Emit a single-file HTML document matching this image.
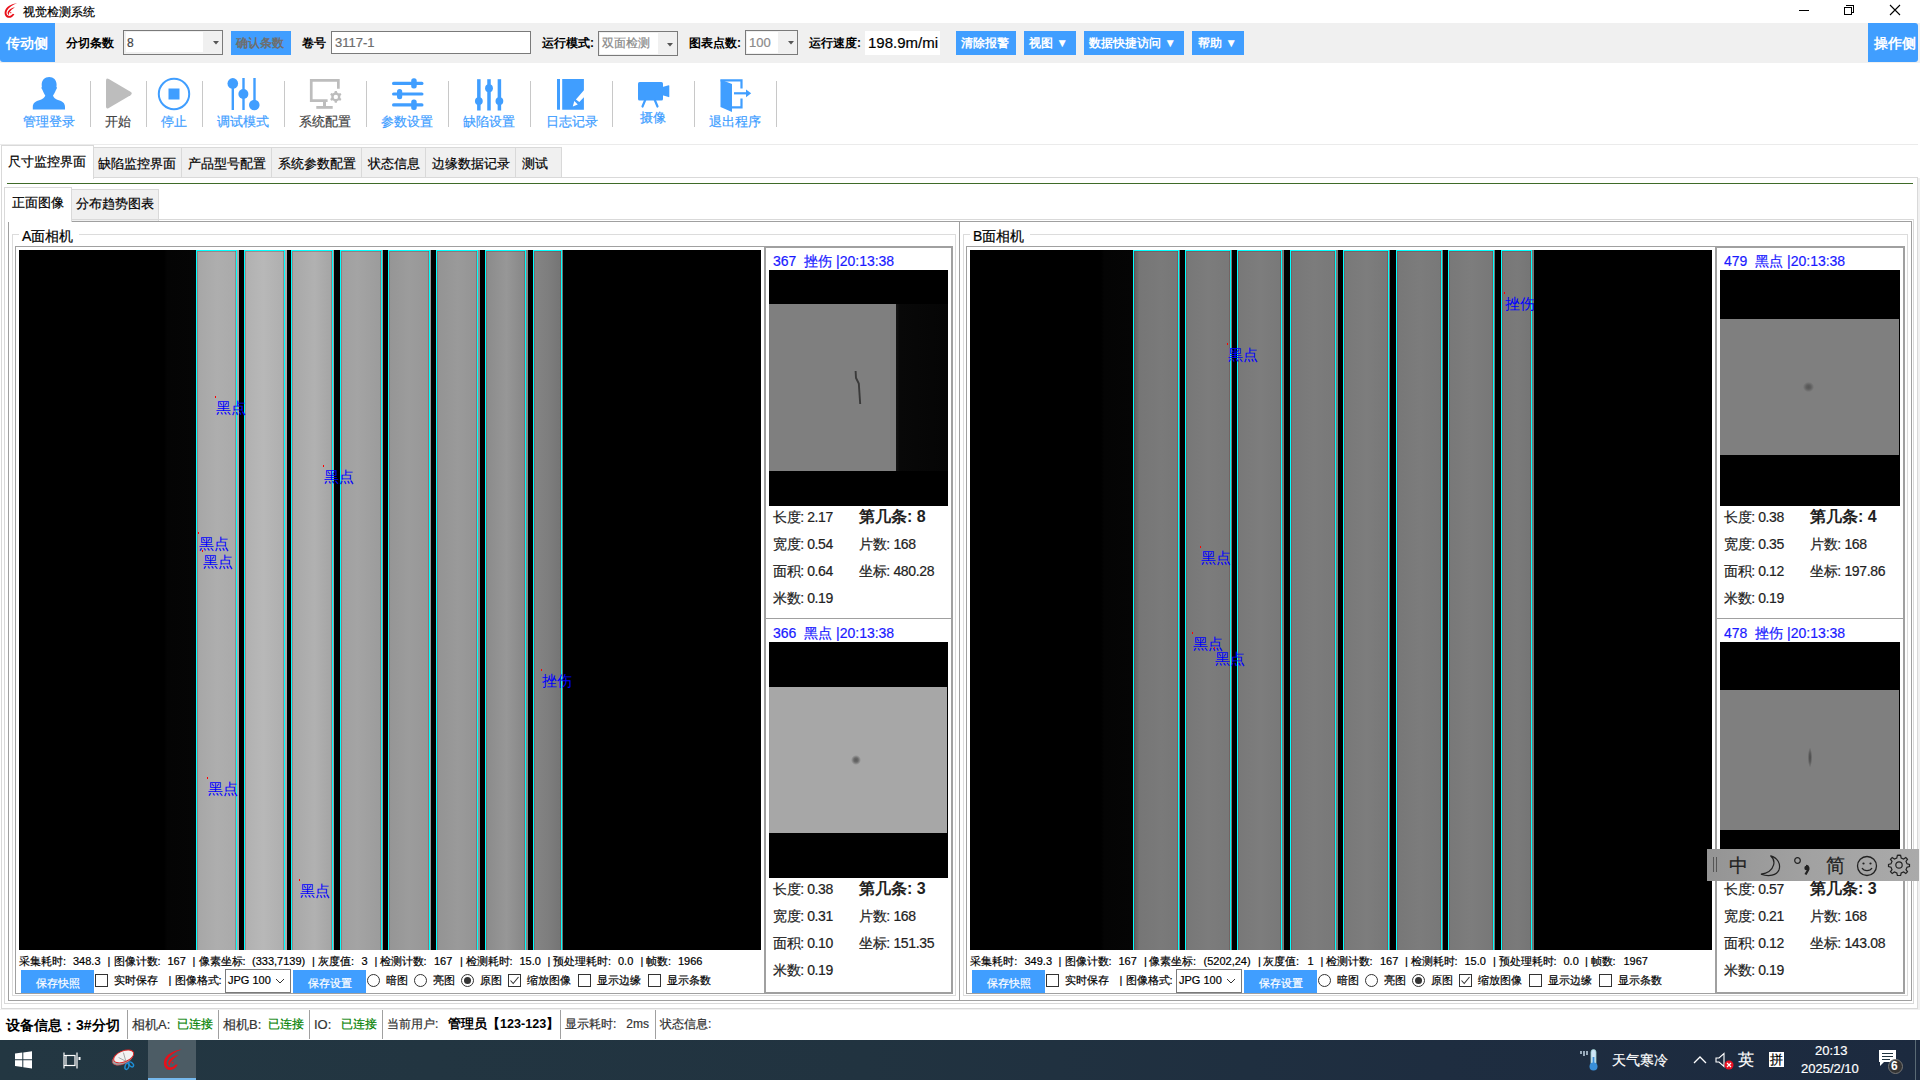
<!DOCTYPE html><html><head><meta charset="utf-8"><style>
html,body{margin:0;padding:0;width:1920px;height:1080px;overflow:hidden;background:#fff;
font-family:"Liberation Sans",sans-serif;}
.t{position:absolute;white-space:nowrap;-webkit-text-stroke-width:0.2px}
.b{position:absolute;box-sizing:border-box;}
svg{position:absolute;overflow:visible}
</style></head><body>
<svg style="left:3.5px;top:2.5px" width="13.6" height="15.6" viewBox="163 1048.8 19.3 22.1"><path d="M181.6 1049.3 C176.5 1049.8 168.5 1052.5 165.2 1058 C162.6 1062.5 164 1068.2 168.6 1069.6 C172 1070.5 175.5 1068.5 177.8 1064.6 L175.6 1064.2 C174 1066.3 171.5 1067.6 169.4 1067 C166.5 1066.2 165.8 1062.6 167.4 1059.6 C169.8 1054.8 175.5 1051.5 181.6 1049.3 Z" fill="#e8101a"/>
<path d="M178.5 1054.8 C174.5 1055.6 170.2 1057.8 168.6 1061 C167.6 1063 168.2 1065.3 170.2 1065.8 C169.7 1064.6 169.9 1063.2 170.8 1061.9 C172.5 1059.2 175.3 1057 178.5 1054.8 Z" fill="#e8101a"/>
<circle cx="172.6" cy="1062.5" r="0.9" fill="#e8101a"/></svg>
<div class="t" style="left:23px;top:6px;font-size:12px;line-height:12px;color:#000;">视觉检测系统</div>
<div class="b" style="left:1799px;top:10px;width:10px;height:1px;background:#000"></div>
<div class="b" style="left:1852px;top:12px;width:2px;height:1px;background:#000"></div>
<div class="b" style="left:1846px;top:5px;width:8px;height:8px;border:1px solid #000;border-left:none;border-bottom:none"></div>
<div class="b" style="left:1844px;top:7px;width:8px;height:8px;border:1px solid #000;background:#fff"></div>
<svg style="left:1889px;top:4px" width="12" height="12" viewBox="0 0 12 12"><path d="M1 1 L11 11 M11 1 L1 11" stroke="#000" stroke-width="1.1"/></svg>
<div class="b" style="left:0px;top:23px;width:1920px;height:40px;background:#f0f0f0"></div>
<div class="b" style="left:0px;top:23px;width:55px;height:39px;background:#409eff;border-radius:0 0 0 3px"></div>
<div class="t" style="left:6px;top:36px;font-size:14px;line-height:14px;color:#fff;font-weight:bold;-webkit-text-stroke-width:0;">传动侧</div>
<div class="t" style="left:66px;top:37px;font-size:12px;line-height:12px;color:#000;font-weight:bold;-webkit-text-stroke-width:0;">分切条数</div>
<div class="b" style="left:123px;top:30px;width:100px;height:25px;border:1px solid #7a7a7a;background:#f0f0f0"></div>
<div class="b" style="left:126px;top:32px;width:77px;height:20px;background:#fff"></div>
<svg style="left:213px;top:41px" width="6" height="4"><path d="M0 0 L6 0 L3 3.5 Z" fill="#555"/></svg>
<div class="t" style="left:127px;top:37px;font-size:12px;line-height:12px;color:#444;">8</div>
<div class="b" style="left:231px;top:31px;width:60px;height:24px;background:#409eff"></div>
<div class="t" style="left:236px;top:37px;font-size:12px;line-height:12px;color:#6e6e6e;font-weight:bold;-webkit-text-stroke-width:0;">确认条数</div>
<div class="t" style="left:302px;top:37px;font-size:12px;line-height:12px;color:#000;font-weight:bold;-webkit-text-stroke-width:0;">卷号</div>
<div class="b" style="left:331px;top:31px;width:200px;height:23px;border:1px solid #7a7a7a;background:#fff"></div>
<div class="t" style="left:335px;top:36px;font-size:13px;line-height:13px;color:#6d6d6d;">3117-1</div>
<div class="t" style="left:542px;top:37px;font-size:12px;line-height:12px;color:#000;font-weight:bold;-webkit-text-stroke-width:0;">运行模式:</div>
<div class="b" style="left:598px;top:31px;width:80px;height:25px;border:1px solid #7a7a7a;background:#f0f0f0"></div>
<div class="b" style="left:600px;top:33px;width:58px;height:21px;background:#fff"></div>
<svg style="left:667px;top:43px" width="6" height="4"><path d="M0 0 L6 0 L3 3.5 Z" fill="#555"/></svg>
<div class="t" style="left:602px;top:37px;font-size:12px;line-height:12px;color:#8a8a8a;">双面检测</div>
<div class="t" style="left:689px;top:37px;font-size:12px;line-height:12px;color:#000;font-weight:bold;-webkit-text-stroke-width:0;">图表点数:</div>
<div class="b" style="left:745px;top:30px;width:53px;height:25px;border:1px solid #7a7a7a;background:#f0f0f0"></div>
<div class="b" style="left:747px;top:32px;width:31px;height:21px;background:#fff"></div>
<svg style="left:788px;top:41px" width="6" height="4"><path d="M0 0 L6 0 L3 3.5 Z" fill="#555"/></svg>
<div class="t" style="left:749px;top:36px;font-size:13px;line-height:13px;color:#8a8a8a;">100</div>
<div class="t" style="left:809px;top:37px;font-size:12px;line-height:12px;color:#000;font-weight:bold;-webkit-text-stroke-width:0;">运行速度:</div>
<div class="b" style="left:865px;top:31px;width:75px;height:24px;background:#fff"></div>
<div class="t" style="left:868px;top:35px;font-size:15px;line-height:15px;color:#000;">198.9m/mi</div>
<div class="b" style="left:956px;top:31px;width:60px;height:24px;background:#409eff"></div>
<div class="t" style="left:961px;top:37px;font-size:12px;line-height:12px;color:#fff;font-weight:bold;-webkit-text-stroke-width:0;">清除报警</div>
<div class="b" style="left:1024px;top:31px;width:52px;height:24px;background:#409eff"></div>
<div class="t" style="left:1029px;top:37px;font-size:12px;line-height:12px;color:#fff;font-weight:bold;-webkit-text-stroke-width:0;">视图 ▼</div>
<div class="b" style="left:1084px;top:31px;width:100px;height:24px;background:#409eff"></div>
<div class="t" style="left:1089px;top:37px;font-size:12px;line-height:12px;color:#fff;font-weight:bold;-webkit-text-stroke-width:0;">数据快捷访问 ▼</div>
<div class="b" style="left:1192px;top:31px;width:52px;height:24px;background:#409eff"></div>
<div class="t" style="left:1198px;top:37px;font-size:12px;line-height:12px;color:#fff;font-weight:bold;-webkit-text-stroke-width:0;">帮助 ▼</div>
<div class="b" style="left:1868px;top:23px;width:50px;height:39px;background:#409eff;border-radius:0 3px 3px 0"></div>
<div class="t" style="left:1874px;top:36px;font-size:14px;line-height:14px;color:#fff;font-weight:bold;-webkit-text-stroke-width:0;">操作侧</div>
<div class="b" style="left:0px;top:144px;width:1918px;height:1px;background:#ebebeb"></div>
<div class="b" style="left:90px;top:81px;width:1px;height:46px;background:#c8c8c8"></div>
<div class="b" style="left:146px;top:81px;width:1px;height:46px;background:#c8c8c8"></div>
<div class="b" style="left:202px;top:81px;width:1px;height:46px;background:#c8c8c8"></div>
<div class="b" style="left:284px;top:81px;width:1px;height:46px;background:#c8c8c8"></div>
<div class="b" style="left:366px;top:81px;width:1px;height:46px;background:#c8c8c8"></div>
<div class="b" style="left:448px;top:81px;width:1px;height:46px;background:#c8c8c8"></div>
<div class="b" style="left:530px;top:81px;width:1px;height:46px;background:#c8c8c8"></div>
<div class="b" style="left:612px;top:81px;width:1px;height:46px;background:#c8c8c8"></div>
<div class="b" style="left:694px;top:81px;width:1px;height:46px;background:#c8c8c8"></div>
<div class="b" style="left:776px;top:81px;width:1px;height:46px;background:#c8c8c8"></div>
<div class="t" style="left:23px;top:115px;font-size:13px;line-height:13px;color:#409eff;">管理登录</div>
<div class="t" style="left:105px;top:115px;font-size:13px;line-height:13px;color:#444;">开始</div>
<div class="t" style="left:161px;top:115px;font-size:13px;line-height:13px;color:#409eff;">停止</div>
<div class="t" style="left:217px;top:115px;font-size:13px;line-height:13px;color:#409eff;">调试模式</div>
<div class="t" style="left:299px;top:115px;font-size:13px;line-height:13px;color:#444;">系统配置</div>
<div class="t" style="left:381px;top:115px;font-size:13px;line-height:13px;color:#409eff;">参数设置</div>
<div class="t" style="left:463px;top:115px;font-size:13px;line-height:13px;color:#409eff;">缺陷设置</div>
<div class="t" style="left:546px;top:115px;font-size:13px;line-height:13px;color:#409eff;">日志记录</div>
<div class="t" style="left:709px;top:115px;font-size:13px;line-height:13px;color:#409eff;">退出程序</div>
<div class="t" style="left:640px;top:111px;font-size:13px;line-height:13px;color:#409eff;">摄像</div>
<svg style="left:30px;top:74px" width="38" height="38" viewBox="0 0 38 38">
<path d="M19.2 3 C23.5 3 26.6 6 26.6 10.5 C26.6 11.5 26.5 12.2 26.4 12.8 C27.2 13.2 27 14.8 26 15.8 C25.3 18 24.2 20 23 21.5 C23.5 24 25.5 25 28 26 C32.5 27.2 35 29 35 33 V35.5 H2.8 V33 C2.8 29 5.5 27.2 10 26 C12.5 25 14.6 24 15.3 21.5 C14.2 20 13.1 18 12.4 15.8 C11.4 14.8 11.2 13.2 11.9 12.8 C11.8 12.2 11.7 11.5 11.7 10.5 C11.7 6 14.8 3 19.2 3 Z" fill="#409eff"/>
</svg>
<svg style="left:103px;top:77px" width="32" height="34" viewBox="0 0 32 34">
<path d="M3 3.5 Q3 0.5 5.8 2 L27.5 14.8 Q30 16.5 27.5 18.2 L5.8 31 Q3 32.5 3 29.5 Z" fill="#bdbdbd"/></svg>
<svg style="left:157px;top:77px" width="34" height="34" viewBox="0 0 34 34">
<circle cx="17" cy="17" r="15.2" fill="none" stroke="#409eff" stroke-width="2"/>
<rect x="11.5" y="11.5" width="11" height="11" fill="#409eff"/></svg>
<svg style="left:226px;top:77px" width="36" height="34" viewBox="0 0 36 34">
<rect x="5.6" y="2" width="2.4" height="31" fill="#409eff"/><circle cx="6.8" cy="6.4" r="5.3" fill="#409eff"/>
<rect x="16.3" y="1" width="2.4" height="32" fill="#409eff"/><circle cx="17.4" cy="17" r="5" fill="#409eff"/>
<rect x="27.3" y="1" width="2.4" height="30" fill="#409eff"/><circle cx="28.3" cy="28" r="5.3" fill="#409eff"/>
</svg>
<svg style="left:308px;top:78px" width="36" height="33" viewBox="0 0 36 33">
<path d="M1.9 1 H31.7 V10.7 H29 V3.7 H4.6 V21.3 H19.6 V24 H1.9 Z" fill="#bdbdbd"/>
<rect x="15" y="23.5" width="3" height="4.5" fill="#bdbdbd"/><rect x="8.3" y="28" width="16.4" height="2.8" fill="#bdbdbd"/>
<path d="M26.46 14.50 L26.76 12.99 L28.84 12.99 L29.14 14.50 L30.94 15.54 L32.40 15.04 L33.44 16.85 L32.28 17.87 L32.28 19.93 L33.44 20.95 L32.40 22.76 L30.94 22.26 L29.14 23.30 L28.84 24.81 L26.76 24.81 L26.46 23.30 L24.66 22.26 L23.20 22.76 L22.16 20.95 L23.32 19.93 L23.32 17.87 L22.16 16.85 L23.20 15.04 L24.66 15.54 Z" fill="#bdbdbd"/>
<circle cx="27.8" cy="18.9" r="2.2" fill="#fff"/>
</svg>
<svg style="left:390px;top:77px" width="36" height="34" viewBox="0 0 36 34">
<rect x="2" y="4.8" width="31.5" height="3.2" rx="1.6" fill="#409eff"/><rect x="21.2" y="1.2" width="5.5" height="10.3" rx="2.5" fill="#409eff"/>
<rect x="2" y="15.4" width="31.5" height="3.2" rx="1.6" fill="#409eff"/><rect x="7" y="11.9" width="5.2" height="10.3" rx="2.5" fill="#409eff"/>
<rect x="2" y="26.3" width="31.5" height="3.2" rx="1.6" fill="#409eff"/><rect x="21.2" y="22.5" width="5.5" height="10.4" rx="2.5" fill="#409eff"/>
</svg>
<svg style="left:474px;top:77px" width="32" height="34" viewBox="0 0 32 34">
<rect x="3.1" y="2.2" width="3.5" height="31.3" fill="#409eff"/><circle cx="4.85" cy="24.1" r="3.9" fill="#409eff"/>
<rect x="13.25" y="2.2" width="3.5" height="31.3" fill="#409eff"/><circle cx="15" cy="11.2" r="3.9" fill="#409eff"/>
<rect x="23.65" y="2.2" width="3.5" height="31.3" fill="#409eff"/><circle cx="25.4" cy="24.1" r="3.9" fill="#409eff"/>
</svg>
<svg style="left:556px;top:77px" width="30" height="34" viewBox="0 0 30 34">
<rect x="1" y="2" width="3" height="30.7" fill="#409eff"/>
<path d="M6.2 2 H27.9 V13.3 L19.9 22.6 L23.3 25.1 L27.9 20.2 V32.7 H6.2 Z" fill="#409eff"/>
<path d="M18.3 24 L21.8 27.6 L16.8 29.6 Z" fill="#fff"/>
</svg>
<svg style="left:636px;top:80px" width="36" height="30" viewBox="0 0 36 30">
<rect x="2" y="2" width="25" height="18.5" rx="1.6" fill="#409eff"/>
<path d="M26.5 7 L32.6 5.2 Q33.3 5.1 33.3 5.8 V16.6 Q33.3 17.3 32.6 17.1 L26.5 15.3 Z" fill="#409eff"/>
<path d="M9.2 20 L6.5 26.5 M18.8 20 L21.5 26.5" stroke="#409eff" stroke-width="2.2" stroke-linecap="round"/>
</svg>
<svg style="left:719px;top:78px" width="36" height="36" viewBox="0 0 36 36">
<path d="M1.5 1.5 L13 6 V34 L1.5 29 Z" fill="#409eff"/>
<path d="M1.5 2.3 H22.5 V10.5" stroke="#409eff" stroke-width="2.2" fill="none"/>
<path d="M12 29.3 H22.5 V20.5" stroke="#409eff" stroke-width="2.2" fill="none"/>
<path d="M15 15.3 H28.5" stroke="#409eff" stroke-width="2.2"/>
<path d="M27 11.5 L32.2 15.3 L27 19.3 Z" fill="#409eff"/>
</svg>
<div class="b" style="left:93px;top:147px;width:89px;height:31px;background:#f0f0f0;border:1px solid #d9d9d9;border-bottom:none"></div>
<div class="t" style="left:97.5px;top:157px;font-size:13.3px;line-height:13.3px;color:#000;">缺陷监控界面</div>
<div class="b" style="left:181px;top:147px;width:91px;height:31px;background:#f0f0f0;border:1px solid #d9d9d9;border-bottom:none"></div>
<div class="t" style="left:187.7px;top:157px;font-size:13.3px;line-height:13.3px;color:#000;">产品型号配置</div>
<div class="b" style="left:271px;top:147px;width:91px;height:31px;background:#f0f0f0;border:1px solid #d9d9d9;border-bottom:none"></div>
<div class="t" style="left:277.7px;top:157px;font-size:13.3px;line-height:13.3px;color:#000;">系统参数配置</div>
<div class="b" style="left:361px;top:147px;width:65px;height:31px;background:#f0f0f0;border:1px solid #d9d9d9;border-bottom:none"></div>
<div class="t" style="left:367.7px;top:157px;font-size:13.3px;line-height:13.3px;color:#000;">状态信息</div>
<div class="b" style="left:425px;top:147px;width:91px;height:31px;background:#f0f0f0;border:1px solid #d9d9d9;border-bottom:none"></div>
<div class="t" style="left:431.8px;top:157px;font-size:13.3px;line-height:13.3px;color:#000;">边缘数据记录</div>
<div class="b" style="left:515px;top:147px;width:47px;height:31px;background:#f0f0f0;border:1px solid #d9d9d9;border-bottom:none"></div>
<div class="t" style="left:521.8px;top:157px;font-size:13.3px;line-height:13.3px;color:#000;">测试</div>
<div class="b" style="left:1px;top:177px;width:1917px;height:832px;border:1px solid #d9d9d9"></div>
<div class="b" style="left:0px;top:1009px;width:1918px;height:1px;background:#f0f0f0"></div>
<div class="b" style="left:1px;top:145px;width:93px;height:34px;background:#fff;border:1px solid #d9d9d9;border-bottom:none"></div>
<div class="t" style="left:8px;top:155px;font-size:13.3px;line-height:13.3px;color:#000;">尺寸监控界面</div>
<div class="b" style="left:7px;top:183px;width:1906px;height:1px;background:#3f6b28"></div>
<div class="b" style="left:71px;top:189px;width:88px;height:32px;background:#f0f0f0;border:1px solid #d9d9d9;border-bottom:none"></div>
<div class="t" style="left:76px;top:197px;font-size:13px;line-height:13px;color:#000;">分布趋势图表</div>
<div class="b" style="left:4px;top:219px;width:1910px;height:785px;border:1px solid #d9d9d9"></div>
<div class="b" style="left:8px;top:221px;width:1904px;height:780px;border:1px solid #a0a0a0"></div>
<div class="b" style="left:4px;top:187px;width:68px;height:35px;background:#fff;border:1px solid #d9d9d9;border-bottom:none"></div>
<div class="t" style="left:12px;top:196px;font-size:13px;line-height:13px;color:#000;">正面图像</div>
<div class="b" style="left:959px;top:221px;width:1px;height:780px;background:#a0a0a0"></div>
<div class="b" style="left:12px;top:234px;width:944px;height:762px;border:1px solid #dcdcdc"></div>
<div class="b" style="left:19px;top:229px;width:60px;height:15px;background:#fff"></div>
<div class="t" style="left:22px;top:229px;font-size:14px;line-height:14px;color:#000;">A面相机</div>
<div class="b" style="left:15px;top:246px;width:938px;height:748px;border:1px solid #a0a0a0"></div>
<div class="b" style="left:19px;top:250px;width:742px;height:700px;background:#000"></div>
<div class="b" style="left:164px;top:250px;width:32px;height:700px;background:linear-gradient(90deg,#000,#040404 10%,#050505)"></div>
<div class="b" style="left:196px;top:250px;width:43px;height:700px;background:linear-gradient(90deg,#a6a6a6,#aeaeae 50%,#a9a9a9)"></div>
<div class="b" style="left:196px;top:250px;width:41px;height:700px;border:1px solid #00ffff;border-bottom:none;box-shadow:inset 1px 1px 0 rgba(110,50,50,0.3),inset -1px 0 0 rgba(110,50,50,0.3)"></div>
<div class="b" style="left:244px;top:250px;width:43px;height:700px;background:linear-gradient(90deg,#b0b0b0,#b8b8b8 45%,#adadad)"></div>
<div class="b" style="left:244px;top:250px;width:41px;height:700px;border:1px solid #00ffff;border-bottom:none;box-shadow:inset 1px 1px 0 rgba(110,50,50,0.3),inset -1px 0 0 rgba(110,50,50,0.3)"></div>
<div class="b" style="left:291px;top:250px;width:43px;height:700px;background:linear-gradient(90deg,#a7a7a7,#b1b1b1 55%,#a3a3a3)"></div>
<div class="b" style="left:291px;top:250px;width:42px;height:700px;border:1px solid #00ffff;border-bottom:none;box-shadow:inset 1px 1px 0 rgba(110,50,50,0.3),inset -1px 0 0 rgba(110,50,50,0.3)"></div>
<div class="b" style="left:340px;top:250px;width:43px;height:700px;background:linear-gradient(90deg,#9f9f9f,#a4a4a4 40%,#9b9b9b)"></div>
<div class="b" style="left:340px;top:250px;width:42px;height:700px;border:1px solid #00ffff;border-bottom:none;box-shadow:inset 1px 1px 0 rgba(110,50,50,0.3),inset -1px 0 0 rgba(110,50,50,0.3)"></div>
<div class="b" style="left:388px;top:250px;width:43px;height:700px;background:linear-gradient(90deg,#959595,#9c9c9c 50%,#969696)"></div>
<div class="b" style="left:388px;top:250px;width:42px;height:700px;border:1px solid #00ffff;border-bottom:none;box-shadow:inset 1px 1px 0 rgba(110,50,50,0.3),inset -1px 0 0 rgba(110,50,50,0.3)"></div>
<div class="b" style="left:436px;top:250px;width:44px;height:700px;background:linear-gradient(90deg,#939393,#9a9a9a 50%,#939393)"></div>
<div class="b" style="left:436px;top:250px;width:42px;height:700px;border:1px solid #00ffff;border-bottom:none;box-shadow:inset 1px 1px 0 rgba(110,50,50,0.3),inset -1px 0 0 rgba(110,50,50,0.3)"></div>
<div class="b" style="left:485px;top:250px;width:43px;height:700px;background:linear-gradient(90deg,#8a8a8a,#979797 50%,#848484)"></div>
<div class="b" style="left:485px;top:250px;width:41px;height:700px;border:1px solid #00ffff;border-bottom:none;box-shadow:inset 1px 1px 0 rgba(110,50,50,0.3),inset -1px 0 0 rgba(110,50,50,0.3)"></div>
<div class="b" style="left:533px;top:250px;width:30px;height:700px;background:linear-gradient(90deg,#858585,#7e7e7e 50%,#737373)"></div>
<div class="b" style="left:533px;top:250px;width:29px;height:700px;border:1px solid #00ffff;border-bottom:none;box-shadow:inset 1px 1px 0 rgba(110,50,50,0.3),inset -1px 0 0 rgba(110,50,50,0.3)"></div>
<div class="b" style="left:215px;top:396px;width:1px;height:2px;background:#f00"></div>
<div class="t" style="left:216px;top:400px;font-size:15px;line-height:15px;color:#0000ff;-webkit-text-stroke-width:0;">黑点</div>
<div class="b" style="left:323px;top:465px;width:1px;height:2px;background:#f00"></div>
<div class="t" style="left:324px;top:469px;font-size:15px;line-height:15px;color:#0000ff;-webkit-text-stroke-width:0;">黑点</div>
<div class="b" style="left:198px;top:532px;width:1px;height:2px;background:#f00"></div>
<div class="t" style="left:199px;top:536px;font-size:15px;line-height:15px;color:#0000ff;-webkit-text-stroke-width:0;">黑点</div>
<div class="b" style="left:202px;top:550px;width:1px;height:2px;background:#f00"></div>
<div class="t" style="left:203px;top:554px;font-size:15px;line-height:15px;color:#0000ff;-webkit-text-stroke-width:0;">黑点</div>
<div class="b" style="left:541px;top:669px;width:1px;height:2px;background:#f00"></div>
<div class="t" style="left:542px;top:673px;font-size:15px;line-height:15px;color:#0000ff;-webkit-text-stroke-width:0;">挫伤</div>
<div class="b" style="left:207px;top:777px;width:1px;height:2px;background:#f00"></div>
<div class="t" style="left:208px;top:781px;font-size:15px;line-height:15px;color:#0000ff;-webkit-text-stroke-width:0;">黑点</div>
<div class="b" style="left:299px;top:879px;width:1px;height:2px;background:#f00"></div>
<div class="t" style="left:300px;top:883px;font-size:15px;line-height:15px;color:#0000ff;-webkit-text-stroke-width:0;">黑点</div>
<div class="t" style="left:19px;top:956px;font-size:11px;line-height:11px;color:#000;">采集耗时:</div>
<div class="t" style="left:73px;top:956px;font-size:11px;line-height:11px;color:#000;">348.3</div>
<div class="t" style="left:107.5px;top:956px;font-size:11px;line-height:11px;color:#000;">|</div>
<div class="t" style="left:113.5px;top:956px;font-size:11px;line-height:11px;color:#000;">图像计数:</div>
<div class="t" style="left:167.5px;top:956px;font-size:11px;line-height:11px;color:#000;">167</div>
<div class="t" style="left:192.5px;top:956px;font-size:11px;line-height:11px;color:#000;">|</div>
<div class="t" style="left:198.5px;top:956px;font-size:11px;line-height:11px;color:#000;">像素坐标:</div>
<div class="t" style="left:252px;top:956px;font-size:11px;line-height:11px;color:#000;">(333,7139)</div>
<div class="t" style="left:312px;top:956px;font-size:11px;line-height:11px;color:#000;">|</div>
<div class="t" style="left:318px;top:956px;font-size:11px;line-height:11px;color:#000;">灰度值:</div>
<div class="t" style="left:361.5px;top:956px;font-size:11px;line-height:11px;color:#000;">3</div>
<div class="t" style="left:374.5px;top:956px;font-size:11px;line-height:11px;color:#000;">|</div>
<div class="t" style="left:379.5px;top:956px;font-size:11px;line-height:11px;color:#000;">检测计数:</div>
<div class="t" style="left:434px;top:956px;font-size:11px;line-height:11px;color:#000;">167</div>
<div class="t" style="left:460px;top:956px;font-size:11px;line-height:11px;color:#000;">|</div>
<div class="t" style="left:465.5px;top:956px;font-size:11px;line-height:11px;color:#000;">检测耗时:</div>
<div class="t" style="left:519.5px;top:956px;font-size:11px;line-height:11px;color:#000;">15.0</div>
<div class="t" style="left:547.5px;top:956px;font-size:11px;line-height:11px;color:#000;">|</div>
<div class="t" style="left:553px;top:956px;font-size:11px;line-height:11px;color:#000;">预处理耗时:</div>
<div class="t" style="left:618px;top:956px;font-size:11px;line-height:11px;color:#000;">0.0</div>
<div class="t" style="left:640.5px;top:956px;font-size:11px;line-height:11px;color:#000;">|</div>
<div class="t" style="left:646px;top:956px;font-size:11px;line-height:11px;color:#000;">帧数:</div>
<div class="t" style="left:678px;top:956px;font-size:11px;line-height:11px;color:#000;">1966</div>
<div class="b" style="left:21px;top:970px;width:73px;height:23px;background:#409eff"></div>
<div class="t" style="left:36px;top:978px;font-size:11px;line-height:11px;color:#fff;">保存快照</div>
<div class="b" style="left:95px;top:974px;width:13px;height:13px;border:1px solid #333;background:#fff"></div>
<div class="t" style="left:114px;top:975px;font-size:11px;line-height:11px;color:#000;">实时保存</div>
<div class="t" style="left:168.5px;top:975px;font-size:11px;line-height:11px;color:#000;">|</div>
<div class="t" style="left:174.5px;top:975px;font-size:11px;line-height:11px;color:#000;">图像格式:</div>
<div class="b" style="left:225px;top:969px;width:66px;height:24px;border:1px solid #7a7a7a;background:#fff"></div>
<div class="t" style="left:228px;top:975px;font-size:11px;line-height:11px;color:#000;">JPG 100</div>
<svg style="left:275px;top:978px" width="10" height="6"><path d="M1 1 L5 5 L9 1" stroke="#333" stroke-width="1" fill="none"/></svg>
<div class="b" style="left:293px;top:970px;width:73px;height:23px;background:#409eff"></div>
<div class="t" style="left:308px;top:978px;font-size:11px;line-height:11px;color:#fff;">保存设置</div>
<div class="b" style="left:367px;top:974px;width:13px;height:13px;border:1px solid #333;border-radius:50%;background:#fff"></div>
<div class="t" style="left:386px;top:975px;font-size:11px;line-height:11px;color:#000;">暗图</div>
<div class="b" style="left:414px;top:974px;width:13px;height:13px;border:1px solid #333;border-radius:50%;background:#fff"></div>
<div class="t" style="left:433px;top:975px;font-size:11px;line-height:11px;color:#000;">亮图</div>
<div class="b" style="left:461px;top:974px;width:13px;height:13px;border:1px solid #333;border-radius:50%;background:#fff"></div>
<div class="b" style="left:464px;top:977px;width:7px;height:7px;background:#333;border-radius:50%"></div>
<div class="t" style="left:480px;top:975px;font-size:11px;line-height:11px;color:#000;">原图</div>
<div class="b" style="left:508px;top:974px;width:13px;height:13px;border:1px solid #333;background:#fff"></div>
<svg style="left:508px;top:974px" width="13" height="13"><path d="M2.5 6.5 L5.2 9.5 L10.5 3" stroke="#333" stroke-width="1.1" fill="none"/></svg>
<div class="t" style="left:527px;top:975px;font-size:11px;line-height:11px;color:#000;">缩放图像</div>
<div class="b" style="left:578px;top:974px;width:13px;height:13px;border:1px solid #333;background:#fff"></div>
<div class="t" style="left:597px;top:975px;font-size:11px;line-height:11px;color:#000;">显示边缘</div>
<div class="b" style="left:648px;top:974px;width:13px;height:13px;border:1px solid #333;background:#fff"></div>
<div class="t" style="left:667px;top:975px;font-size:11px;line-height:11px;color:#000;">显示条数</div>
<div class="b" style="left:764px;top:246px;width:189px;height:748px;border:2px solid #a0a0a0;background:#fff"></div>
<div class="b" style="left:766px;top:618px;width:185px;height:1px;background:#a0a0a0"></div>
<div class="t" style="left:773px;top:254px;font-size:14px;line-height:14px;color:#1a1aff;">367&nbsp; 挫伤 |20:13:38</div>
<div class="b" style="left:769px;top:270px;width:179px;height:236px;background:#000"></div>
<div class="b" style="left:769px;top:304px;width:127px;height:167px;background:#7f7f7f"></div><div class="b" style="left:896px;top:304px;width:52px;height:167px;background:linear-gradient(90deg,#161616,#080808 8%,#050505)"></div><svg style="left:0;top:0" width="1" height="1"><path d="M855.6 371 L856 378 L858.8 383.5 L860.2 404" stroke="#2e2e2e" stroke-width="1.9" fill="none" opacity="0.85"/></svg>
<div class="t" style="left:773px;top:510px;font-size:14px;line-height:14px;color:#222;letter-spacing:-0.4px;">长度: 2.17</div>
<div class="t" style="left:859px;top:509px;font-size:16px;line-height:16px;color:#222;font-weight:bold;-webkit-text-stroke-width:0;">第几条: 8</div>
<div class="t" style="left:773px;top:537px;font-size:14px;line-height:14px;color:#222;letter-spacing:-0.4px;">宽度: 0.54</div>
<div class="t" style="left:859px;top:537px;font-size:14px;line-height:14px;color:#222;letter-spacing:-0.35px;">片数: 168</div>
<div class="t" style="left:773px;top:564px;font-size:14px;line-height:14px;color:#222;letter-spacing:-0.4px;">面积: 0.64</div>
<div class="t" style="left:859px;top:564px;font-size:14px;line-height:14px;color:#222;letter-spacing:-0.35px;">坐标: 480.28</div>
<div class="t" style="left:773px;top:591px;font-size:14px;line-height:14px;color:#222;letter-spacing:-0.4px;">米数: 0.19</div>
<div class="t" style="left:773px;top:626px;font-size:14px;line-height:14px;color:#1a1aff;">366&nbsp; 黑点 |20:13:38</div>
<div class="b" style="left:769px;top:642px;width:179px;height:236px;background:#000"></div>
<div class="b" style="left:769px;top:687px;width:178px;height:146px;background:#a7a7a7"></div><div class="b" style="left:851px;top:755px;width:10px;height:10px;background:radial-gradient(circle,#5a5a5a 0,#6a6a6a 30%,rgba(167,167,167,0) 70%)"></div>
<div class="t" style="left:773px;top:882px;font-size:14px;line-height:14px;color:#222;letter-spacing:-0.4px;">长度: 0.38</div>
<div class="t" style="left:859px;top:881px;font-size:16px;line-height:16px;color:#222;font-weight:bold;-webkit-text-stroke-width:0;">第几条: 3</div>
<div class="t" style="left:773px;top:909px;font-size:14px;line-height:14px;color:#222;letter-spacing:-0.4px;">宽度: 0.31</div>
<div class="t" style="left:859px;top:909px;font-size:14px;line-height:14px;color:#222;letter-spacing:-0.35px;">片数: 168</div>
<div class="t" style="left:773px;top:936px;font-size:14px;line-height:14px;color:#222;letter-spacing:-0.4px;">面积: 0.10</div>
<div class="t" style="left:859px;top:936px;font-size:14px;line-height:14px;color:#222;letter-spacing:-0.35px;">坐标: 151.35</div>
<div class="t" style="left:773px;top:963px;font-size:14px;line-height:14px;color:#222;letter-spacing:-0.4px;">米数: 0.19</div>
<div class="b" style="left:963px;top:234px;width:945px;height:762px;border:1px solid #dcdcdc"></div>
<div class="b" style="left:970px;top:229px;width:60px;height:15px;background:#fff"></div>
<div class="t" style="left:973px;top:229px;font-size:14px;line-height:14px;color:#000;">B面相机</div>
<div class="b" style="left:966px;top:246px;width:939px;height:748px;border:1px solid #a0a0a0"></div>
<div class="b" style="left:970px;top:250px;width:742px;height:700px;background:#000"></div>
<div class="b" style="left:1101px;top:250px;width:32px;height:700px;background:linear-gradient(90deg,#000,#040404 10%,#050505)"></div>
<div class="b" style="left:1133px;top:250px;width:47px;height:700px;background:linear-gradient(90deg,#5a5a5a,#767676 14%,#7a7a7a 60%,#777)"></div>
<div class="b" style="left:1133px;top:250px;width:46px;height:700px;border:1px solid #00ffff;border-bottom:none;box-shadow:inset 1px 1px 0 rgba(110,50,50,0.3),inset -1px 0 0 rgba(110,50,50,0.3)"></div>
<div class="b" style="left:1185px;top:250px;width:47px;height:700px;background:linear-gradient(90deg,#777,#7c7c7c 50%,#787878)"></div>
<div class="b" style="left:1185px;top:250px;width:46px;height:700px;border:1px solid #00ffff;border-bottom:none;box-shadow:inset 1px 1px 0 rgba(110,50,50,0.3),inset -1px 0 0 rgba(110,50,50,0.3)"></div>
<div class="b" style="left:1237px;top:250px;width:47px;height:700px;background:linear-gradient(90deg,#787878,#7d7d7d 50%,#787878)"></div>
<div class="b" style="left:1237px;top:250px;width:45px;height:700px;border:1px solid #00ffff;border-bottom:none;box-shadow:inset 1px 1px 0 rgba(110,50,50,0.3),inset -1px 0 0 rgba(110,50,50,0.3)"></div>
<div class="b" style="left:1290px;top:250px;width:48px;height:700px;background:linear-gradient(90deg,#777,#7c7c7c 50%,#787878)"></div>
<div class="b" style="left:1290px;top:250px;width:46px;height:700px;border:1px solid #00ffff;border-bottom:none;box-shadow:inset 1px 1px 0 rgba(110,50,50,0.3),inset -1px 0 0 rgba(110,50,50,0.3)"></div>
<div class="b" style="left:1343px;top:250px;width:47px;height:700px;background:linear-gradient(90deg,#787878,#7d7d7d 50%,#777)"></div>
<div class="b" style="left:1343px;top:250px;width:46px;height:700px;border:1px solid #00ffff;border-bottom:none;box-shadow:inset 1px 1px 0 rgba(110,50,50,0.3),inset -1px 0 0 rgba(110,50,50,0.3)"></div>
<div class="b" style="left:1396px;top:250px;width:47px;height:700px;background:linear-gradient(90deg,#777,#7c7c7c 50%,#787878)"></div>
<div class="b" style="left:1396px;top:250px;width:46px;height:700px;border:1px solid #00ffff;border-bottom:none;box-shadow:inset 1px 1px 0 rgba(110,50,50,0.3),inset -1px 0 0 rgba(110,50,50,0.3)"></div>
<div class="b" style="left:1448px;top:250px;width:47px;height:700px;background:linear-gradient(90deg,#787878,#7d7d7d 50%,#777)"></div>
<div class="b" style="left:1448px;top:250px;width:46px;height:700px;border:1px solid #00ffff;border-bottom:none;box-shadow:inset 1px 1px 0 rgba(110,50,50,0.3),inset -1px 0 0 rgba(110,50,50,0.3)"></div>
<div class="b" style="left:1501px;top:250px;width:33px;height:700px;background:linear-gradient(90deg,#777,#7a7a7a 50%,#747474)"></div>
<div class="b" style="left:1501px;top:250px;width:31px;height:700px;border:1px solid #00ffff;border-bottom:none;box-shadow:inset 1px 1px 0 rgba(110,50,50,0.3),inset -1px 0 0 rgba(110,50,50,0.3)"></div>
<div class="b" style="left:1504px;top:292px;width:1px;height:2px;background:#f00"></div>
<div class="t" style="left:1505px;top:296px;font-size:15px;line-height:15px;color:#0000ff;-webkit-text-stroke-width:0;">挫伤</div>
<div class="b" style="left:1227px;top:343px;width:1px;height:2px;background:#f00"></div>
<div class="t" style="left:1228px;top:347px;font-size:15px;line-height:15px;color:#0000ff;-webkit-text-stroke-width:0;">黑点</div>
<div class="b" style="left:1200px;top:546px;width:1px;height:2px;background:#f00"></div>
<div class="t" style="left:1201px;top:550px;font-size:15px;line-height:15px;color:#0000ff;-webkit-text-stroke-width:0;">黑点</div>
<div class="b" style="left:1192px;top:632px;width:1px;height:2px;background:#f00"></div>
<div class="t" style="left:1193px;top:636px;font-size:15px;line-height:15px;color:#0000ff;-webkit-text-stroke-width:0;">黑点</div>
<div class="b" style="left:1214px;top:647px;width:1px;height:2px;background:#f00"></div>
<div class="t" style="left:1215px;top:651px;font-size:15px;line-height:15px;color:#0000ff;-webkit-text-stroke-width:0;">黑点</div>
<div class="t" style="left:970.3px;top:956px;font-size:11px;line-height:11px;color:#000;">采集耗时:</div>
<div class="t" style="left:1024.5px;top:956px;font-size:11px;line-height:11px;color:#000;">349.3</div>
<div class="t" style="left:1058.5px;top:956px;font-size:11px;line-height:11px;color:#000;">|</div>
<div class="t" style="left:1064.5px;top:956px;font-size:11px;line-height:11px;color:#000;">图像计数:</div>
<div class="t" style="left:1118.5px;top:956px;font-size:11px;line-height:11px;color:#000;">167</div>
<div class="t" style="left:1144px;top:956px;font-size:11px;line-height:11px;color:#000;">|</div>
<div class="t" style="left:1149px;top:956px;font-size:11px;line-height:11px;color:#000;">像素坐标:</div>
<div class="t" style="left:1203.5px;top:956px;font-size:11px;line-height:11px;color:#000;">(5202,24)</div>
<div class="t" style="left:1258px;top:956px;font-size:11px;line-height:11px;color:#000;">|</div>
<div class="t" style="left:1263px;top:956px;font-size:11px;line-height:11px;color:#000;">灰度值:</div>
<div class="t" style="left:1307.5px;top:956px;font-size:11px;line-height:11px;color:#000;">1</div>
<div class="t" style="left:1320.5px;top:956px;font-size:11px;line-height:11px;color:#000;">|</div>
<div class="t" style="left:1325.5px;top:956px;font-size:11px;line-height:11px;color:#000;">检测计数:</div>
<div class="t" style="left:1380px;top:956px;font-size:11px;line-height:11px;color:#000;">167</div>
<div class="t" style="left:1405px;top:956px;font-size:11px;line-height:11px;color:#000;">|</div>
<div class="t" style="left:1410.5px;top:956px;font-size:11px;line-height:11px;color:#000;">检测耗时:</div>
<div class="t" style="left:1464.5px;top:956px;font-size:11px;line-height:11px;color:#000;">15.0</div>
<div class="t" style="left:1493px;top:956px;font-size:11px;line-height:11px;color:#000;">|</div>
<div class="t" style="left:1498.5px;top:956px;font-size:11px;line-height:11px;color:#000;">预处理耗时:</div>
<div class="t" style="left:1563.5px;top:956px;font-size:11px;line-height:11px;color:#000;">0.0</div>
<div class="t" style="left:1585px;top:956px;font-size:11px;line-height:11px;color:#000;">|</div>
<div class="t" style="left:1590.5px;top:956px;font-size:11px;line-height:11px;color:#000;">帧数:</div>
<div class="t" style="left:1623.5px;top:956px;font-size:11px;line-height:11px;color:#000;">1967</div>
<div class="b" style="left:972px;top:970px;width:73px;height:23px;background:#409eff"></div>
<div class="t" style="left:987px;top:978px;font-size:11px;line-height:11px;color:#fff;">保存快照</div>
<div class="b" style="left:1046px;top:974px;width:13px;height:13px;border:1px solid #333;background:#fff"></div>
<div class="t" style="left:1065px;top:975px;font-size:11px;line-height:11px;color:#000;">实时保存</div>
<div class="t" style="left:1119.5px;top:975px;font-size:11px;line-height:11px;color:#000;">|</div>
<div class="t" style="left:1125.5px;top:975px;font-size:11px;line-height:11px;color:#000;">图像格式:</div>
<div class="b" style="left:1176px;top:969px;width:66px;height:24px;border:1px solid #7a7a7a;background:#fff"></div>
<div class="t" style="left:1179px;top:975px;font-size:11px;line-height:11px;color:#000;">JPG 100</div>
<svg style="left:1226px;top:978px" width="10" height="6"><path d="M1 1 L5 5 L9 1" stroke="#333" stroke-width="1" fill="none"/></svg>
<div class="b" style="left:1244px;top:970px;width:73px;height:23px;background:#409eff"></div>
<div class="t" style="left:1259px;top:978px;font-size:11px;line-height:11px;color:#fff;">保存设置</div>
<div class="b" style="left:1318px;top:974px;width:13px;height:13px;border:1px solid #333;border-radius:50%;background:#fff"></div>
<div class="t" style="left:1337px;top:975px;font-size:11px;line-height:11px;color:#000;">暗图</div>
<div class="b" style="left:1365px;top:974px;width:13px;height:13px;border:1px solid #333;border-radius:50%;background:#fff"></div>
<div class="t" style="left:1384px;top:975px;font-size:11px;line-height:11px;color:#000;">亮图</div>
<div class="b" style="left:1412px;top:974px;width:13px;height:13px;border:1px solid #333;border-radius:50%;background:#fff"></div>
<div class="b" style="left:1415px;top:977px;width:7px;height:7px;background:#333;border-radius:50%"></div>
<div class="t" style="left:1431px;top:975px;font-size:11px;line-height:11px;color:#000;">原图</div>
<div class="b" style="left:1459px;top:974px;width:13px;height:13px;border:1px solid #333;background:#fff"></div>
<svg style="left:1459px;top:974px" width="13" height="13"><path d="M2.5 6.5 L5.2 9.5 L10.5 3" stroke="#333" stroke-width="1.1" fill="none"/></svg>
<div class="t" style="left:1478px;top:975px;font-size:11px;line-height:11px;color:#000;">缩放图像</div>
<div class="b" style="left:1529px;top:974px;width:13px;height:13px;border:1px solid #333;background:#fff"></div>
<div class="t" style="left:1548px;top:975px;font-size:11px;line-height:11px;color:#000;">显示边缘</div>
<div class="b" style="left:1599px;top:974px;width:13px;height:13px;border:1px solid #333;background:#fff"></div>
<div class="t" style="left:1618px;top:975px;font-size:11px;line-height:11px;color:#000;">显示条数</div>
<div class="b" style="left:1715px;top:246px;width:190px;height:748px;border:2px solid #a0a0a0;background:#fff"></div>
<div class="b" style="left:1717px;top:618px;width:186px;height:1px;background:#a0a0a0"></div>
<div class="t" style="left:1724px;top:254px;font-size:14px;line-height:14px;color:#1a1aff;">479&nbsp; 黑点 |20:13:38</div>
<div class="b" style="left:1720px;top:270px;width:180px;height:236px;background:#000"></div>
<div class="b" style="left:1720px;top:319px;width:179px;height:136px;background:#7f7f7f"></div><div class="b" style="left:1803px;top:382px;width:11px;height:10px;background:radial-gradient(ellipse,#555 0,#5e5e5e 30%,rgba(127,127,127,0) 72%)"></div>
<div class="t" style="left:1724px;top:510px;font-size:14px;line-height:14px;color:#222;letter-spacing:-0.4px;">长度: 0.38</div>
<div class="t" style="left:1810px;top:509px;font-size:16px;line-height:16px;color:#222;font-weight:bold;-webkit-text-stroke-width:0;">第几条: 4</div>
<div class="t" style="left:1724px;top:537px;font-size:14px;line-height:14px;color:#222;letter-spacing:-0.4px;">宽度: 0.35</div>
<div class="t" style="left:1810px;top:537px;font-size:14px;line-height:14px;color:#222;letter-spacing:-0.35px;">片数: 168</div>
<div class="t" style="left:1724px;top:564px;font-size:14px;line-height:14px;color:#222;letter-spacing:-0.4px;">面积: 0.12</div>
<div class="t" style="left:1810px;top:564px;font-size:14px;line-height:14px;color:#222;letter-spacing:-0.35px;">坐标: 197.86</div>
<div class="t" style="left:1724px;top:591px;font-size:14px;line-height:14px;color:#222;letter-spacing:-0.4px;">米数: 0.19</div>
<div class="t" style="left:1724px;top:626px;font-size:14px;line-height:14px;color:#1a1aff;">478&nbsp; 挫伤 |20:13:38</div>
<div class="b" style="left:1720px;top:642px;width:180px;height:236px;background:#000"></div>
<div class="b" style="left:1720px;top:690px;width:179px;height:140px;background:#7f7f7f"></div><div class="b" style="left:1808px;top:748px;width:4px;height:19px;background:radial-gradient(ellipse,#4a4a4a 0,#5a5a5a 35%,rgba(127,127,127,0) 75%)"></div>
<div class="t" style="left:1724px;top:882px;font-size:14px;line-height:14px;color:#222;letter-spacing:-0.4px;">长度: 0.57</div>
<div class="t" style="left:1810px;top:881px;font-size:16px;line-height:16px;color:#222;font-weight:bold;-webkit-text-stroke-width:0;">第几条: 3</div>
<div class="t" style="left:1724px;top:909px;font-size:14px;line-height:14px;color:#222;letter-spacing:-0.4px;">宽度: 0.21</div>
<div class="t" style="left:1810px;top:909px;font-size:14px;line-height:14px;color:#222;letter-spacing:-0.35px;">片数: 168</div>
<div class="t" style="left:1724px;top:936px;font-size:14px;line-height:14px;color:#222;letter-spacing:-0.4px;">面积: 0.12</div>
<div class="t" style="left:1810px;top:936px;font-size:14px;line-height:14px;color:#222;letter-spacing:-0.35px;">坐标: 143.08</div>
<div class="t" style="left:1724px;top:963px;font-size:14px;line-height:14px;color:#222;letter-spacing:-0.4px;">米数: 0.19</div>
<div class="b" style="left:1918px;top:178px;width:2px;height:832px;background:#f0f0f0"></div>
<div class="b" style="left:1707px;top:849px;width:212px;height:32px;background:linear-gradient(90deg,#949494,#a2a2a2 50%,#aaaaaa)"></div>
<div class="b" style="left:1713px;top:857px;width:1px;height:15px;background:#555"></div><div class="b" style="left:1716px;top:857px;width:1px;height:15px;background:#555"></div>
<div class="t" style="left:1729px;top:856px;font-size:19px;line-height:19px;color:#222;">中</div>
<div class="t" style="left:1826px;top:856px;font-size:19px;line-height:19px;color:#222;">简</div>
<svg style="left:0;top:0" width="1" height="1"><path d="M1770.5 855.8 C1777.5 857.5 1781 864 1779 869.8 C1776.8 875.5 1768.8 877 1761 874.2 C1767.5 873.2 1772.3 869.5 1773.6 864.8 C1774.5 861.5 1773.4 858.2 1770.5 855.8 Z" fill="none" stroke="#222" stroke-width="1.2"/></svg>
<svg style="left:1793px;top:855px" width="20" height="22" viewBox="0 0 20 22"><circle cx="4.5" cy="5.5" r="2.8" fill="none" stroke="#222" stroke-width="1.2"/><path d="M13 11 C15.5 11 16 13.5 14.8 15.5 L12.5 19.5" stroke="#222" stroke-width="2.3" fill="none"/><circle cx="13.5" cy="13" r="2.2" fill="#222"/></svg>
<svg style="left:1856px;top:855px" width="22" height="22" viewBox="0 0 22 22"><circle cx="11" cy="11" r="9.5" fill="none" stroke="#222" stroke-width="1.3"/><circle cx="7.5" cy="8.5" r="1.1" fill="#222"/><circle cx="14.5" cy="8.5" r="1.1" fill="#222"/><path d="M6 13 C8 16.5 14 16.5 16 13" stroke="#222" stroke-width="1.3" fill="none"/></svg>
<svg style="left:1888px;top:854px" width="22" height="22" viewBox="0 0 22 22"><path d="M9.2 1.5 H12.8 L13.4 4.3 L15.6 5.3 L18 3.7 L20.3 6 L18.7 8.4 L19.7 10.6 L22 11.2 V12.8" fill="none" stroke="none"/>
<circle cx="11" cy="11" r="3.2" fill="none" stroke="#222" stroke-width="1.2"/>
<path d="M9.3 1.5 L12.7 1.5 L13.3 4.2 L15.8 5.3 L18.1 3.8 L20.2 5.9 L18.7 8.2 L19.8 10.7 L22.5 11.3 L22.5 12.7" fill="none" stroke="none"/>
<path d="M11 1.2 L12.6 1.4 L13.2 4 L15.6 5 L17.8 3.5 L19.5 5.2 L18 7.4 L19 9.8 L21.5 10.4 L21.5 12.6 L19 13.2 L18 15.6 L19.5 17.8 L17.8 19.5 L15.6 18 L13.2 19 L12.6 21.5 L9.4 21.5 L8.8 19 L6.4 18 L4.2 19.5 L2.5 17.8 L4 15.6 L3 13.2 L0.5 12.6 L0.5 10.4 L3 9.8 L4 7.4 L2.5 5.2 L4.2 3.5 L6.4 5 L8.8 4 L9.4 1.4 Z" fill="none" stroke="#222" stroke-width="1.2"/></svg>
<div class="t" style="left:6px;top:1018px;font-size:14px;line-height:14px;color:#000;font-weight:bold;-webkit-text-stroke-width:0;">设备信息：3#分切</div>
<div class="b" style="left:127px;top:1010px;width:1px;height:29px;background:#a0a0a0"></div>
<div class="b" style="left:218px;top:1010px;width:1px;height:29px;background:#a0a0a0"></div>
<div class="b" style="left:309px;top:1010px;width:1px;height:29px;background:#a0a0a0"></div>
<div class="b" style="left:382px;top:1010px;width:1px;height:29px;background:#a0a0a0"></div>
<div class="b" style="left:560px;top:1010px;width:1px;height:29px;background:#a0a0a0"></div>
<div class="b" style="left:655px;top:1010px;width:1px;height:29px;background:#a0a0a0"></div>
<div class="t" style="left:132px;top:1018px;font-size:13px;line-height:13px;color:#333;">相机A:</div>
<div class="t" style="left:177px;top:1018px;font-size:12px;line-height:12px;color:green;">已连接</div>
<div class="t" style="left:223px;top:1018px;font-size:13px;line-height:13px;color:#333;">相机B:</div>
<div class="t" style="left:268px;top:1018px;font-size:12px;line-height:12px;color:green;">已连接</div>
<div class="t" style="left:314px;top:1018px;font-size:13px;line-height:13px;color:#333;">IO:</div>
<div class="t" style="left:341px;top:1018px;font-size:12px;line-height:12px;color:green;">已连接</div>
<div class="t" style="left:387px;top:1018px;font-size:12px;line-height:12px;color:#333;">当前用户:</div>
<div class="t" style="left:448px;top:1018px;font-size:12.6px;line-height:12.6px;color:#000;font-weight:bold;-webkit-text-stroke-width:0;">管理员【123-123】</div>
<div class="t" style="left:565px;top:1018px;font-size:12px;line-height:12px;color:#333;">显示耗时:&nbsp;&nbsp; 2ms</div>
<div class="t" style="left:660px;top:1018px;font-size:12px;line-height:12px;color:#333;">状态信息:</div>
<div class="b" style="left:0px;top:1040px;width:1920px;height:40px;background:linear-gradient(90deg,#233742,#213340 45%,#1e2d40 75%,#1c2a3f)"></div>
<svg style="left:15px;top:1051px" width="18" height="18" viewBox="0 0 18 18"><path d="M0 2.5 L7.3 1.5 V8.3 H0 Z M8.3 1.4 L17 0.2 V8.3 H8.3 Z M0 9.3 H7.3 V16.1 L0 15.1 Z M8.3 9.3 H17 V17.4 L8.3 16.2 Z" fill="#fff"/></svg>
<svg style="left:63px;top:1052px" width="18" height="17" viewBox="0 0 18 17"><path d="M1 0.5 V16.5 M14 0.5 V16.5 M1 3.5 H12 M1 13.5 H12" stroke="#fff" stroke-width="1.2" fill="none"/><rect x="3" y="3.5" width="9" height="10" fill="none" stroke="#fff" stroke-width="1.2"/><rect x="15.5" y="5" width="2" height="3" fill="#fff"/></svg>
<svg style="left:108px;top:1046px" width="28" height="26" viewBox="108 1046 28 26">
<ellipse cx="122.4" cy="1058.6" rx="10.8" ry="5.6" transform="rotate(-22 122.4 1058.6)" fill="#a0a8ad" stroke="#d84040" stroke-width="0.6"/>
<ellipse cx="123.6" cy="1056.4" rx="10.6" ry="5.5" transform="rotate(-22 123.6 1056.4)" fill="#f3f3f3" stroke="#e02424" stroke-width="0.9"/>
<path d="M123.4 1052.6 L125.8 1061 M118.6 1057.5 L125.6 1061.2" stroke="#8a8a8a" stroke-width="0.7" fill="none"/>
<ellipse cx="127" cy="1066.3" rx="1.9" ry="3.2" transform="rotate(18 127 1066.3)" fill="none" stroke="#1e90d8" stroke-width="1.4"/>
<ellipse cx="131" cy="1064.4" rx="1.8" ry="3" transform="rotate(-48 131 1064.4)" fill="none" stroke="#1e90d8" stroke-width="1.4"/>
</svg>
<div class="b" style="left:148px;top:1040px;width:48px;height:40px;background:#4c5c65"></div>
<div class="b" style="left:148px;top:1078px;width:48px;height:2px;background:#76b9ed"></div>
<svg style="left:163px;top:1048.8px" width="19.3" height="22.1" viewBox="163 1048.8 19.3 22.1"><path d="M181.6 1049.3 C176.5 1049.8 168.5 1052.5 165.2 1058 C162.6 1062.5 164 1068.2 168.6 1069.6 C172 1070.5 175.5 1068.5 177.8 1064.6 L175.6 1064.2 C174 1066.3 171.5 1067.6 169.4 1067 C166.5 1066.2 165.8 1062.6 167.4 1059.6 C169.8 1054.8 175.5 1051.5 181.6 1049.3 Z" fill="#e8101a"/>
<path d="M178.5 1054.8 C174.5 1055.6 170.2 1057.8 168.6 1061 C167.6 1063 168.2 1065.3 170.2 1065.8 C169.7 1064.6 169.9 1063.2 170.8 1061.9 C172.5 1059.2 175.3 1057 178.5 1054.8 Z" fill="#e8101a"/>
<circle cx="172.6" cy="1062.5" r="0.9" fill="#e8101a"/></svg>
<svg style="left:1580px;top:1049px" width="22" height="22" viewBox="0 0 22 22"><rect x="0" y="2" width="2" height="3" fill="#9ab"/><rect x="3" y="2" width="2" height="5" fill="#9ab"/><rect x="6" y="2" width="2" height="4" fill="#9ab"/><rect x="11" y="0.5" width="5" height="16" rx="2.5" fill="#cfe6f7" stroke="#9cc" stroke-width="0.8"/><circle cx="13.5" cy="17.5" r="4" fill="#3a8fd8"/><rect x="12.6" y="8" width="1.8" height="9" fill="#3a8fd8"/></svg>
<div class="t" style="left:1612px;top:1053px;font-size:14px;line-height:14px;color:#fff;">天气寒冷</div>
<svg style="left:1693px;top:1055px" width="14" height="9" viewBox="0 0 14 9"><path d="M1 8 L7 2 L13 8" stroke="#fff" stroke-width="1.3" fill="none"/></svg>
<svg style="left:1715px;top:1051px" width="20" height="20" viewBox="0 0 20 20"><path d="M1 7 H4 L9 2.5 V15.5 L4 11 H1 Z" fill="none" stroke="#fff" stroke-width="1.1"/><circle cx="14" cy="14" r="4.5" fill="#e81123"/><path d="M12 12 L16 16 M16 12 L12 16" stroke="#fff" stroke-width="1.2"/></svg>
<div class="t" style="left:1738px;top:1052px;font-size:16px;line-height:16px;color:#fff;">英</div>
<div class="b" style="left:1769px;top:1052px;width:15px;height:15px;background:#fff"></div>
<div class="t" style="left:1770px;top:1053px;font-size:13px;line-height:13px;color:#000;">拼</div>
<div class="t" style="left:1815px;top:1044px;font-size:13px;line-height:13px;color:#fff;">20:13</div>
<div class="t" style="left:1801px;top:1062px;font-size:13px;line-height:13px;color:#fff;">2025/2/10</div>
<svg style="left:1878px;top:1049px" width="26" height="26" viewBox="0 0 26 26"><path d="M1 1 H18 V13 H6 L2 17 V13 H1 Z" fill="#fff"/><path d="M4 4.5 H15 M4 7.5 H15 M4 10.5 H12" stroke="#213440" stroke-width="1"/><circle cx="17.5" cy="17.5" r="7" fill="#333" stroke="#777" stroke-width="1"/></svg>
<div class="t" style="left:1891px;top:1060px;font-size:12px;line-height:12px;color:#fff;font-weight:bold;-webkit-text-stroke-width:0;">6</div>
<div class="b" style="left:1915px;top:1040px;width:1px;height:40px;background:#5a6a75"></div>
</body></html>
